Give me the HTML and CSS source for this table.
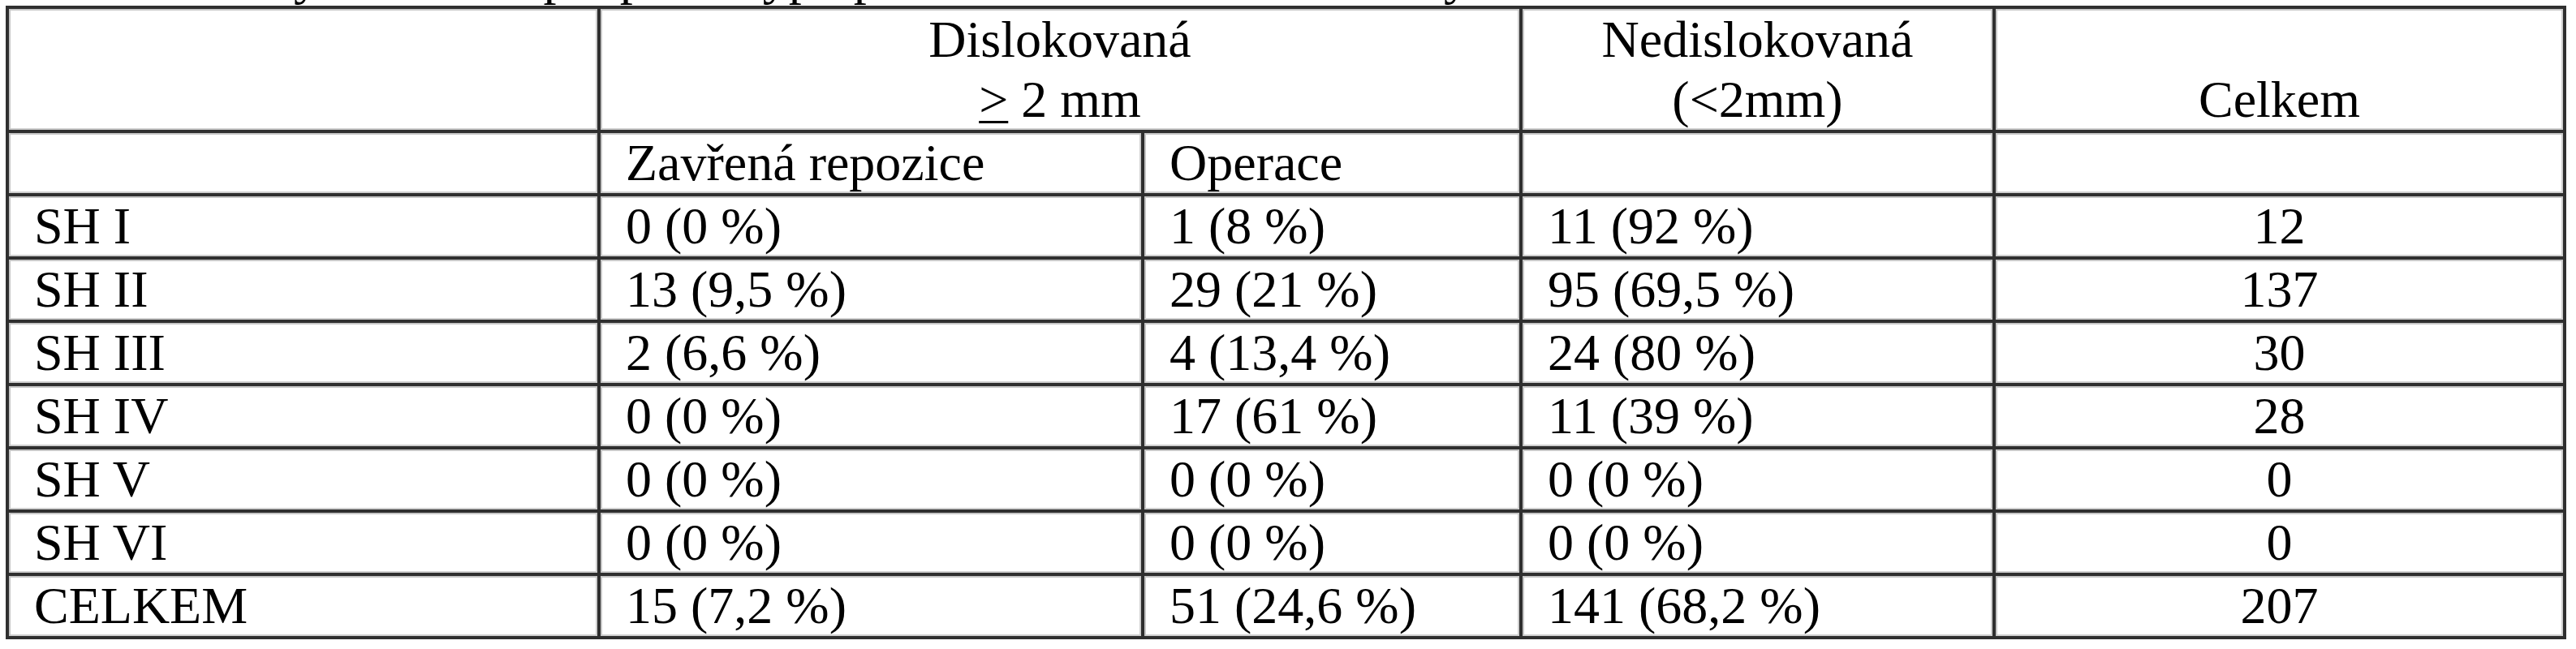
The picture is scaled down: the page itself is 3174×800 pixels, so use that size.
FILE: index.html
```html
<!DOCTYPE html>
<html lang="cs">
<head>
<meta charset="utf-8">
<title>Tabulka – léčba zlomenin dle Salter-Harrise</title>
<link rel="stylesheet" href="styles.css">
</head>
<body>
<div class="page">
  <p class="caption">Tabulka 5: Výsledná terapie podle typu poranění dle Salter-Harrisovy klasifikace</p>
  <table class="data">
    <colgroup>
      <col class="c1"><col class="c2"><col class="c3"><col class="c4"><col class="c5">
    </colgroup>
    <tbody>
      <tr class="head1">
        <td></td>
        <td colspan="2" class="center">Dislokovaná<br><u class="ge">&gt;</u> 2 mm</td>
        <td class="center">Nedislokovaná<br>(&lt;2mm)</td>
        <td class="center bottom">Celkem</td>
      </tr>
      <tr class="row">
        <td></td><td>Zavřená repozice</td><td>Operace</td><td></td><td></td>
      </tr>
      <tr class="row">
        <td>SH I</td><td>0 (0 %)</td><td>1 (8 %)</td><td>11 (92 %)</td><td class="center">12</td>
      </tr>
      <tr class="row">
        <td>SH II</td><td>13 (9,5 %)</td><td>29 (21 %)</td><td>95 (69,5 %)</td><td class="center">137</td>
      </tr>
      <tr class="row">
        <td>SH III</td><td>2 (6,6 %)</td><td>4 (13,4 %)</td><td>24 (80 %)</td><td class="center">30</td>
      </tr>
      <tr class="row">
        <td>SH IV</td><td>0 (0 %)</td><td>17 (61 %)</td><td>11 (39 %)</td><td class="center">28</td>
      </tr>
      <tr class="row">
        <td>SH V</td><td>0 (0 %)</td><td>0 (0 %)</td><td>0 (0 %)</td><td class="center">0</td>
      </tr>
      <tr class="row">
        <td>SH VI</td><td>0 (0 %)</td><td>0 (0 %)</td><td>0 (0 %)</td><td class="center">0</td>
      </tr>
      <tr class="row">
        <td>CELKEM</td><td>15 (7,2 %)</td><td>51 (24,6 %)</td><td>141 (68,2 %)</td><td class="center">207</td>
      </tr>
    </tbody>
  </table>
</div>
</body>
</html>
```

FILE: styles.css
```css
html, body {
  margin: 0;
  padding: 0;
  background: #ffffff;
}

body {
  font-family: "Liberation Serif", "Times New Roman", serif;
  font-size: 64px;
  color: #000000;
  overflow: hidden;
}

.page {
  display: flow-root;
}

/* caption above the table: only its descenders fall inside the frame */
.caption {
  margin: -61px 0 0 30px;
  height: 64px;
  line-height: 64px;
  white-space: nowrap;
}

.data {
  border-collapse: collapse;
  table-layout: fixed;
  width: 3155px;
  margin: 4px 0 0 7px;
}

.c1 { width: 729px; }
.c2 { width: 670px; }
.c3 { width: 466px; }
.c4 { width: 583px; }
.c5 { width: 703px; }

.data td {
  border: 4px solid #2f2f2f;
  padding: 0 0 0 31px;
  line-height: 72px;
  vertical-align: middle;
  white-space: nowrap;
  box-shadow: inset 2px 2px 0 #c6c6c6, inset -2px -2px 0 #cfcfcf;
}

.head1 { height: 153px; }
.head1 td { line-height: 74px; }
.row { height: 78px; }

.data td.center {
  text-align: center;
  padding: 0;
}

.data td.bottom {
  vertical-align: bottom;
}

.ge {
  text-decoration: underline;
  text-decoration-thickness: 3px;
  text-underline-offset: 5px;
}
```
